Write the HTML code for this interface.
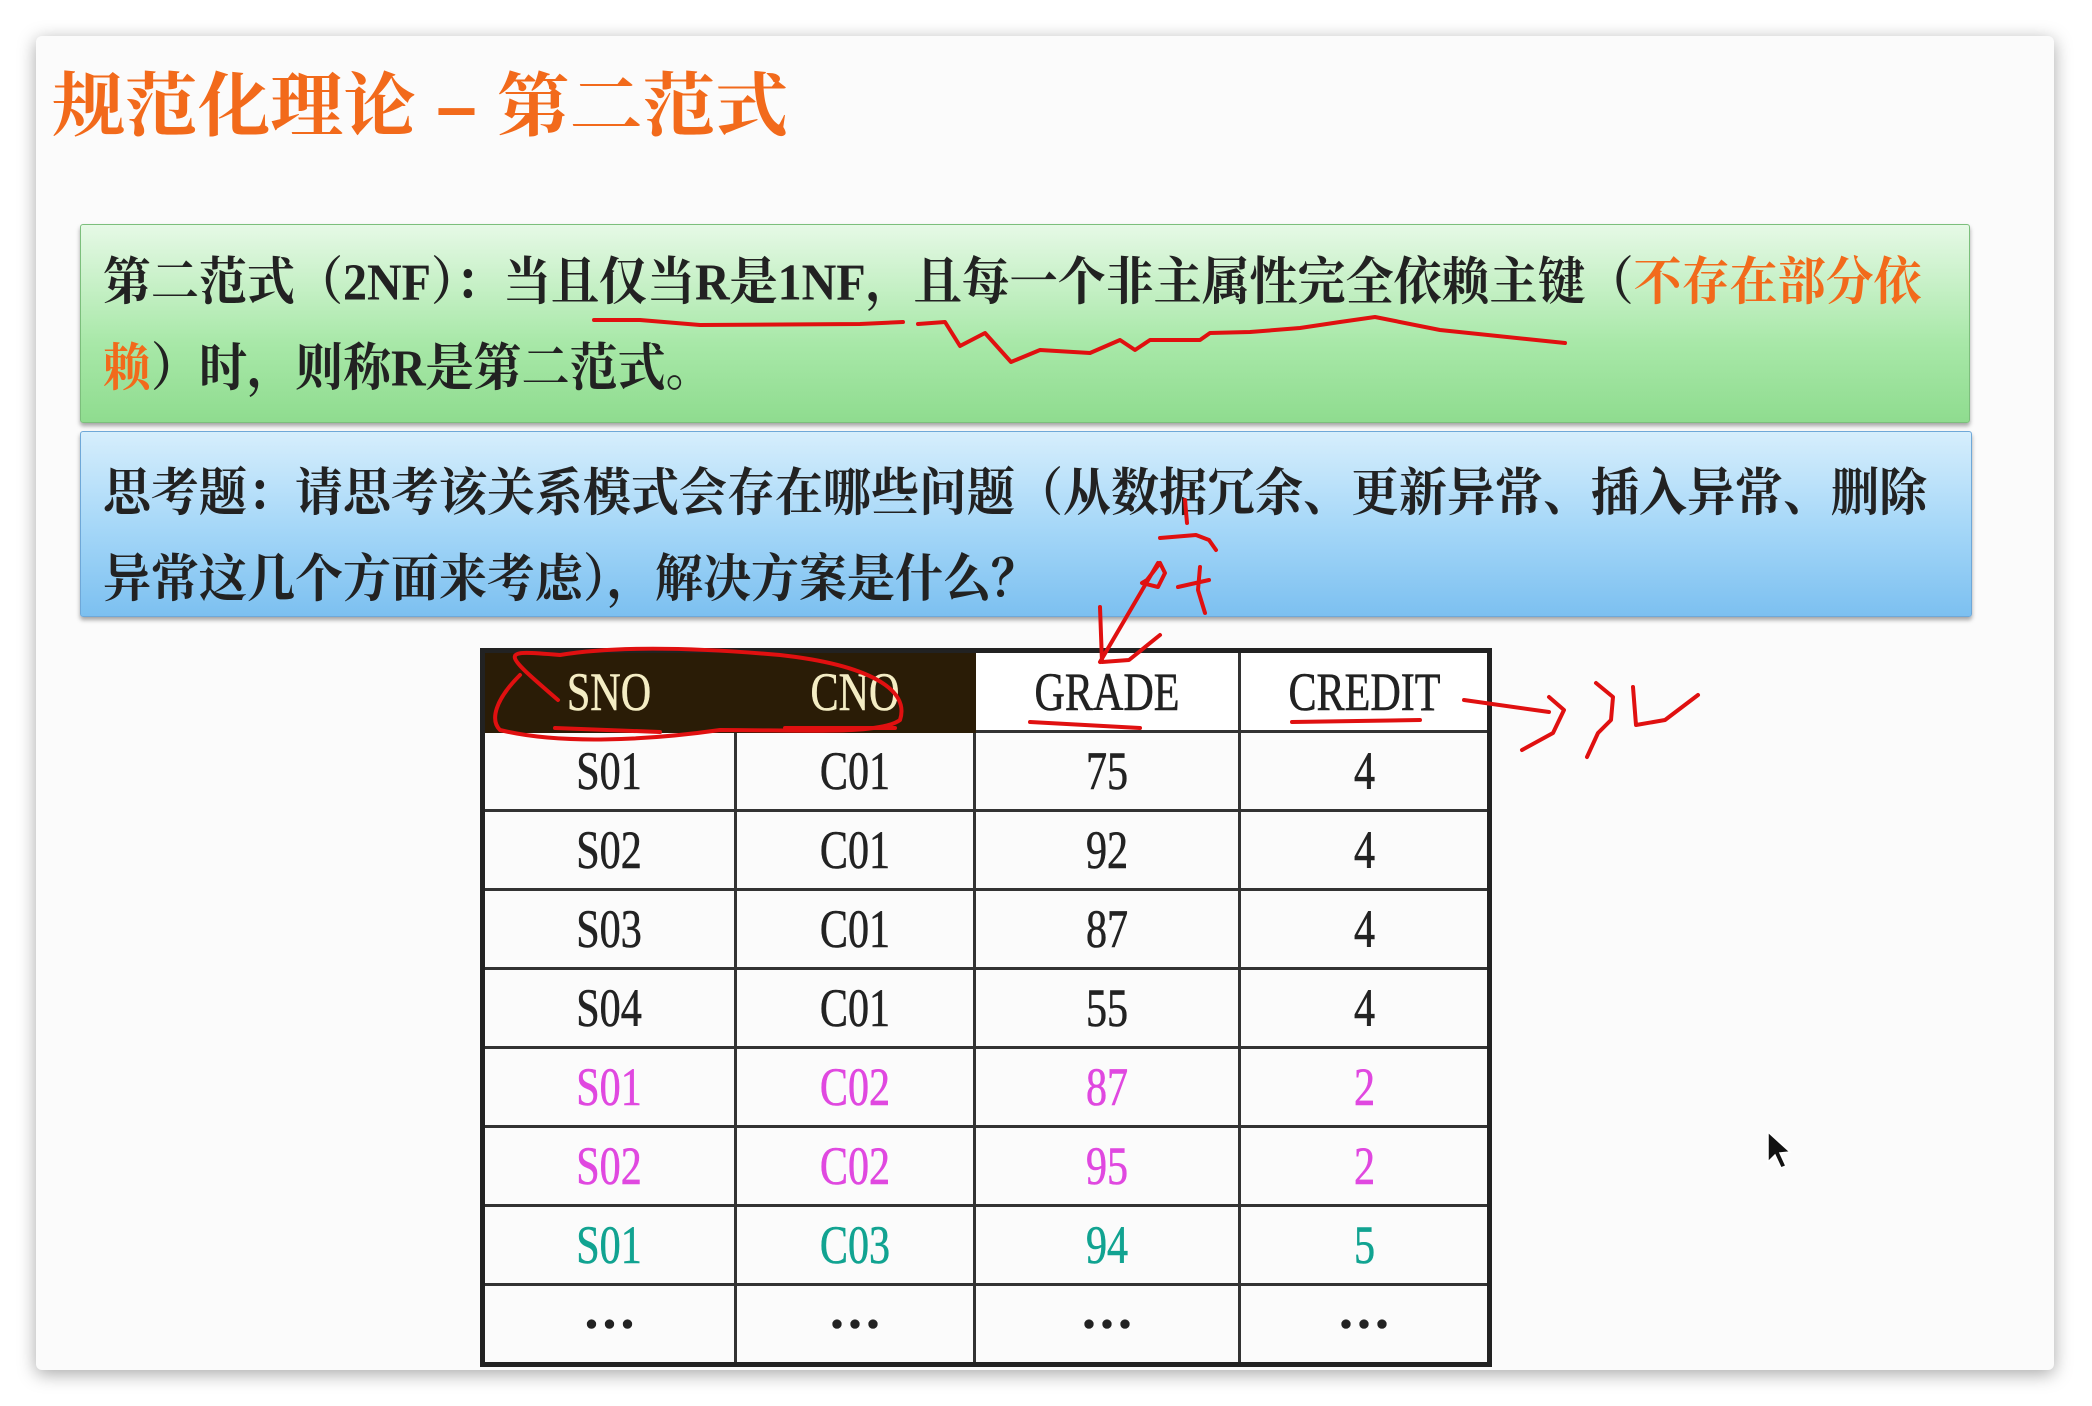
<!DOCTYPE html>
<html><head><meta charset="utf-8"><style>
html,body{margin:0;padding:0;width:2092px;height:1406px;background:#fff;overflow:hidden;position:relative;}
.win{position:absolute;left:36px;top:36px;width:2018px;height:1334px;background:#fbfbfb;box-shadow:0 4px 18px rgba(0,0,0,.35);border-radius:6px;}
.title{position:absolute;left:52px;top:50px;font:bold 70px "Liberation Sans","Noto Serif CJK SC",serif;color:#f26a1b;white-space:nowrap;transform:scaleX(1.04);transform-origin:0 50%;}
.box{position:absolute;left:80px;border-radius:3px;box-shadow:0 3px 4px rgba(0,0,0,.35);}
.g{top:224px;width:1888px;height:197px;background:linear-gradient(#e6f9e6,#a8e8a8 60%,#8fdc8f);border:1px solid #7cbf7c;}
.b{top:431px;width:1890px;height:184px;background:linear-gradient(#d6eefc,#a7d8f8 50%,#7cc0f0);border:1px solid #6fa8d8;}
.t{position:absolute;left:22px;font:bold 48px "Liberation Serif","Noto Serif CJK SC",serif;color:#222;white-space:nowrap;transform-origin:0 50%;transform:scaleY(1.08);}
.o{color:#f26a1b}
table{position:absolute;left:480px;top:648px;border-collapse:collapse;border:5px solid #222;}
td{border:3px solid #333;height:76px;text-align:center;font:54px "Liberation Serif",serif;color:#222;padding:0;-webkit-text-stroke:0.6px currentColor;}
td span{display:inline-block;transform:scaleX(.78);}
.hd td{background:#fff;height:77px;}
.hd td.d{background:#2a1c06;color:#f4edc4;border-color:#2a1c06;}
.m td{color:#e048e0}.c td{color:#11a391}
svg{position:absolute;left:0;top:0;}
</style></head><body>
<div class="win"></div>
<div class="title">规范化理论 – 第二范式</div>
<div class="box g">
<div class="t" style="top:18px;">第二范式（2NF）：当且仅当R是1NF，且每一个非主属性完全依赖主键（<span class="o">不存在部分依</span></div>
<div class="t" style="top:104px;"><span class="o">赖</span>）时，则称R是第二范式。</div>
</div>
<div class="box b">
<div class="t" style="top:22px;">思考题：请思考该关系模式会存在哪些问题（从数据冗余、更新异常、插入异常、删除</div>
<div class="t" style="top:108px;">异常这几个方面来考虑），解决方案是什么？</div>
</div>
<table>
<tr class="hd"><td class="d" style="width:249px"><span>SNO</span></td><td class="d" style="width:236px"><span>CNO</span></td><td style="width:262px"><span>GRADE</span></td><td style="width:246px"><span>CREDIT</span></td></tr>
<tr><td><span>S01</span></td><td><span>C01</span></td><td><span>75</span></td><td><span>4</span></td></tr>
<tr><td><span>S02</span></td><td><span>C01</span></td><td><span>92</span></td><td><span>4</span></td></tr>
<tr><td><span>S03</span></td><td><span>C01</span></td><td><span>87</span></td><td><span>4</span></td></tr>
<tr><td><span>S04</span></td><td><span>C01</span></td><td><span>55</span></td><td><span>4</span></td></tr>
<tr class="m"><td><span>S01</span></td><td><span>C02</span></td><td><span>87</span></td><td><span>2</span></td></tr>
<tr class="m"><td><span>S02</span></td><td><span>C02</span></td><td><span>95</span></td><td><span>2</span></td></tr>
<tr class="c"><td><span>S01</span></td><td><span>C03</span></td><td><span>94</span></td><td><span>5</span></td></tr>
<tr><td><b>···</b></td><td><b>···</b></td><td><b>···</b></td><td><b>···</b></td></tr>
</table>
<svg width="2092" height="1406" fill="none" stroke="#e01010" stroke-width="4" stroke-linecap="round" stroke-linejoin="round">
<path d="M594 320 L640 320 L700 325 L860 324 L903 322"/>
<path d="M918 324 L945 322 L960 346 L985 333 L1011 362 L1040 350 L1090 353 L1120 340 L1135 350 L1150 340 L1200 340 L1210 333 L1250 332 L1300 328 L1340 322 L1375 317 L1440 330 L1565 343"/>
<path d="M1185 500 L1187 523 M1160 538 L1196 535 L1209 540 L1216 550 M1160 563 L1147 580 L1142 583 L1158 587 L1165 573 L1160 563 M1200 567 L1198 590 L1205 613 M1178 587 L1209 580 M1158 563 L1100 662 M1100 607 L1102 662 L1129 660 L1160 635"/>
<path d="M558 700 C500 650 500 650 560 655 C620 645 700 648 780 655 C870 665 910 690 900 720 C880 735 800 730 720 730 C650 740 560 745 500 730 C490 720 495 700 520 675"/>
<path d="M555 728 L660 732 M785 728 L895 728 M1030 722 L1140 728 M1292 722 L1420 720"/>
<path d="M1464 700 L1549 712 M1549 697 L1564 710 L1553 733 L1522 750 M1596 683 L1613 697 L1611 720 L1598 733 L1587 757 M1633 687 L1636 725 L1665 720 L1698 695"/>
</svg>
<svg width="2092" height="1406"><path d="M1768 1132 L1768 1162 L1775 1155 L1781 1168 L1786 1166 L1780 1153 L1790 1152 Z" fill="#111" stroke="#fff" stroke-width="1.5"/></svg>
</body></html>
